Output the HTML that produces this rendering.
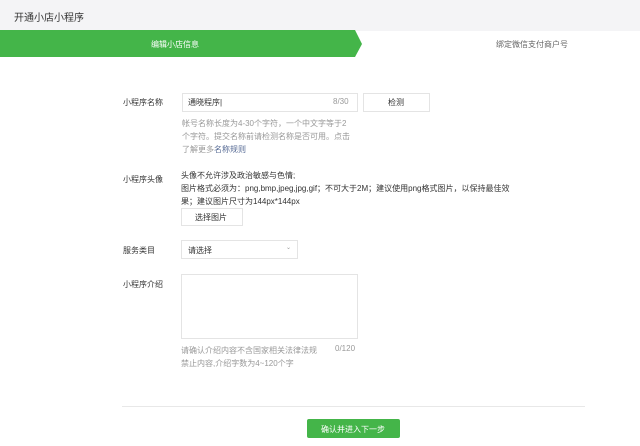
<!DOCTYPE html>
<html><head><meta charset="utf-8"><style>
*{margin:0;padding:0;box-sizing:border-box}
body{width:640px;height:446px;background:#fff;font-family:"Liberation Sans","Noto Sans CJK SC",sans-serif;color:#333;position:relative;overflow:hidden;font-size:8px}
.a{position:absolute;white-space:nowrap}
.box{position:absolute;border:1px solid #e4e4e4;background:#fff}
.g{color:#999}
</style></head><body>
<div class="a" style="left:0;top:0;width:640px;height:31px;background:#f4f4f6"></div>
<div class="a" style="left:14px;top:9px;font-size:10px;color:#333">开通小店小程序</div>
<div class="a" style="left:0;top:31px;width:640px;height:27px;background:#fff"></div>
<svg class="a" style="left:0;top:30px" width="370" height="28"><polygon points="0,0 355,0 362,14 355,27 0,27" fill="#44b549"/></svg>
<div class="a" style="left:151px;top:39px;color:#fff;font-size:8px">编辑小店信息</div>
<div class="a" style="left:496px;top:39px;color:#666;font-size:8px">绑定微信支付商户号</div>

<div class="a" style="left:123px;top:97px">小程序名称</div>
<div class="box" style="left:182px;top:93px;width:176px;height:19px"></div>
<div class="a" style="left:188px;top:97px;color:#333">通晓程序|</div>
<div class="a g" style="left:333px;top:97px">8/30</div>
<div class="box" style="left:363px;top:93px;width:67px;height:19px"></div>
<div class="a" style="left:388px;top:97px">检测</div>
<div class="a g" style="left:182px;top:117px;line-height:13px">帐号名称长度为4-30个字符，一个中文字等于2<br>个字符。提交名称前请检测名称是否可用。点击<br>了解更多<span style="color:#576b95">名称规则</span></div>

<div class="a" style="left:123px;top:174px">小程序头像</div>
<div class="a" style="left:181px;top:169px;line-height:13px;color:#333">头像不允许涉及政治敏感与色情;<br>图片格式必须为：png,bmp,jpeg,jpg,gif；不可大于2M；建议使用png格式图片，以保持最佳效<br>果；建议图片尺寸为144px*144px</div>
<div class="box" style="left:181px;top:208px;width:62px;height:18px"></div>
<div class="a" style="left:195px;top:212px">选择图片</div>

<div class="a" style="left:123px;top:245px">服务类目</div>
<div class="box" style="left:181px;top:240px;width:117px;height:19px"></div>
<div class="a" style="left:188px;top:245px">请选择</div>
<div class="a g" style="left:286px;top:244px;font-size:6px">⌄</div>

<div class="a" style="left:123px;top:279px">小程序介绍</div>
<div class="box" style="left:181px;top:274px;width:177px;height:65px"></div>
<div class="a g" style="left:181px;top:344px;line-height:13px">请确认介绍内容不含国家相关法律法规<br>禁止内容,介绍字数为4~120个字</div>
<div class="a g" style="left:335px;top:344px">0/120</div>

<div class="a" style="left:122px;top:406px;width:463px;height:1px;background:#e8e8e8"></div>
<div class="a" style="left:307px;top:419px;width:93px;height:19px;background:#44b549;border-radius:2px"></div>
<div class="a" style="left:321px;top:424px;color:#fff">确认并进入下一步</div>
</body></html>
